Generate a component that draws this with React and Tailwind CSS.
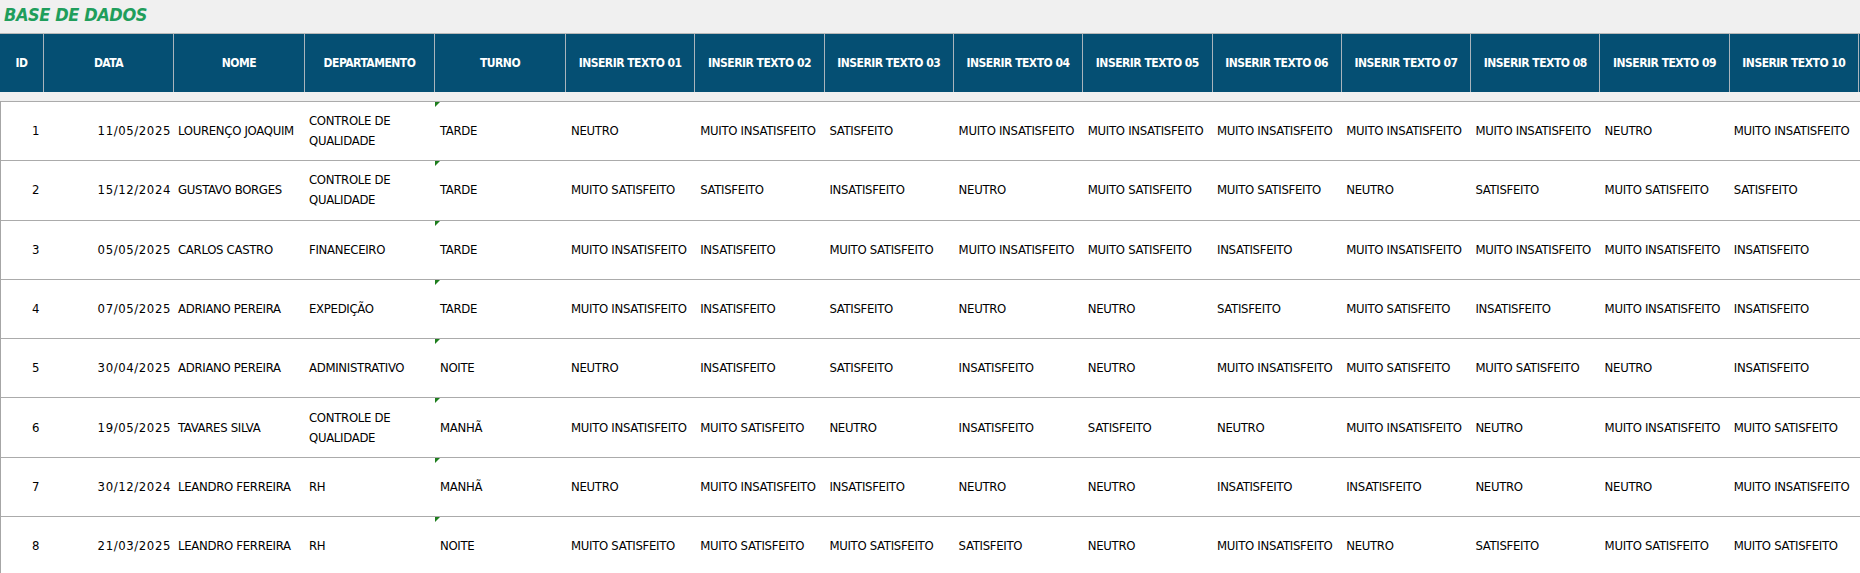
const headers = [
  "ID",
  "DATA",
  "NOME",
  "DEPARTAMENTO",
  "TURNO",
  "INSERIR TEXTO 01",
  "INSERIR TEXTO 02",
  "INSERIR TEXTO 03",
  "INSERIR TEXTO 04",
  "INSERIR TEXTO 05",
  "INSERIR TEXTO 06",
  "INSERIR TEXTO 07",
  "INSERIR TEXTO 08",
  "INSERIR TEXTO 09",
  "INSERIR TEXTO 10",
]

const N = "NEUTRO"
const S = "SATISFEITO"
const I = "INSATISFEITO"
const MS = "MUITO SATISFEITO"
const MI = "MUITO INSATISFEITO"

const rows = [
  { id: 1, date: "11/05/2025", name: "LOURENÇO JOAQUIM", dept: "CONTROLE DE QUALIDADE", shift: "TARDE", answers: [N, MI, S, MI, MI, MI, MI, MI, N, MI] },
  { id: 2, date: "15/12/2024", name: "GUSTAVO BORGES", dept: "CONTROLE DE QUALIDADE", shift: "TARDE", answers: [MS, S, I, N, MS, MS, N, S, MS, S] },
  { id: 3, date: "05/05/2025", name: "CARLOS CASTRO", dept: "FINANECEIRO", shift: "TARDE", answers: [MI, I, MS, MI, MS, I, MI, MI, MI, I] },
  { id: 4, date: "07/05/2025", name: "ADRIANO PEREIRA", dept: "EXPEDIÇÃO", shift: "TARDE", answers: [MI, I, S, N, N, S, MS, I, MI, I] },
  { id: 5, date: "30/04/2025", name: "ADRIANO PEREIRA", dept: "ADMINISTRATIVO", shift: "NOITE", answers: [N, I, S, I, N, MI, MS, MS, N, I] },
  { id: 6, date: "19/05/2025", name: "TAVARES SILVA", dept: "CONTROLE DE QUALIDADE", shift: "MANHÃ", answers: [MI, MS, N, I, S, N, MI, N, MI, MS] },
  { id: 7, date: "30/12/2024", name: "LEANDRO FERREIRA", dept: "RH", shift: "MANHÃ", answers: [N, MI, I, N, N, I, I, N, N, MI] },
  { id: 8, date: "21/03/2025", name: "LEANDRO FERREIRA", dept: "RH", shift: "NOITE", answers: [MS, MS, MS, S, N, MI, N, S, MS, MS] },
]

const cols = "grid grid-cols-[43px_130px_131px_130px_131px_repeat(10,minmax(0,1fr))_2px]"

export default function App() {
  return (
    <div
      className="w-[1860px] h-[573px] overflow-hidden bg-[#f0f0f0] text-black"
      style={{ fontFamily: '"DejaVu Sans Condensed", "Liberation Sans", sans-serif' }}
    >
      <div className="h-[33px] pl-[4px] pt-[2px]">
        <h1 className="text-[18px] leading-[26px] font-bold italic tracking-[-0.4px] text-[#1f9e5c]">BASE DE DADOS</h1>
      </div>

      <div className={`${cols} h-[59px] bg-[#054f73] border-t border-[#b9b9b9]`}>
        {headers.map((h, i) => (
          <div
            key={h}
            className={`flex items-center justify-center text-[12px] font-bold tracking-[-0.5px] text-white whitespace-nowrap ${i > 0 ? "border-l border-[#a9b4bc]" : ""}`}
          >
            {h}
          </div>
        ))}
        <div className="border-l border-[#a9b4bc]" />
      </div>

      <div className="h-[9px]" />

      <div className="bg-white border-l border-[#a6a6a6]">
        {rows.map((r) => (
          <div
            key={r.id}
            className={`${cols} h-[59.3px] border-t border-[#ababab] text-[13px] tracking-[-0.3px] leading-[20px]`}
          >
            <div className="flex items-center pl-[31px]">{r.id}</div>
            <div className="flex items-center justify-end pr-[3px] tracking-[0.6px]">{r.date}</div>
            <div className="flex items-center pl-[4px] whitespace-nowrap">{r.name}</div>
            <div className="flex items-center pl-[4px] pr-[8px]">{r.dept}</div>
            <div className="relative flex items-center pl-[5px]">
              <span className="absolute left-0 top-0 w-0 h-0 border-t-[5px] border-r-[5px] border-t-[#1e7e1e] border-r-transparent" />
              {r.shift}
            </div>
            {r.answers.map((a, i) => (
              <div key={i} className="flex items-center pl-[5px] whitespace-nowrap">
                {a}
              </div>
            ))}
            <div />
          </div>
        ))}
      </div>
    </div>
  )
}
